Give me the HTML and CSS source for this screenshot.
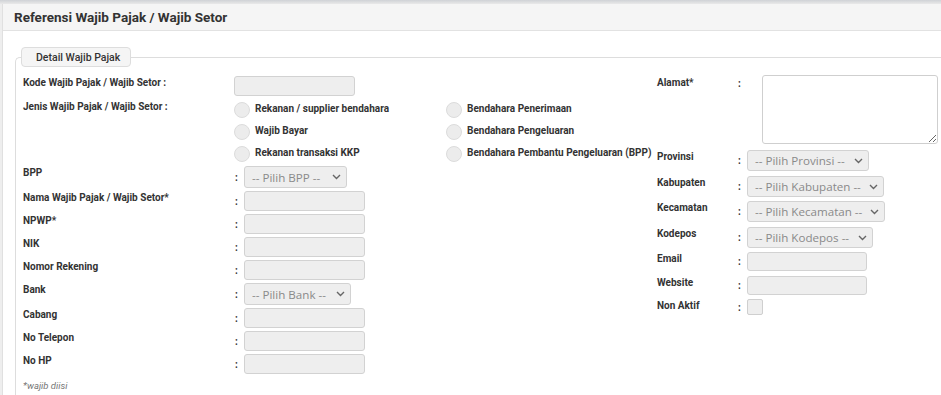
FILE: index.html
```html
<!DOCTYPE html>
<html lang="en">
<head>
    <meta charset="UTF-8">
    <meta name="viewport" content="width=device-width, initial-scale=1.0">
    <title>Referensi Wajib Pajak / Wajib Setor</title>
    <link rel="stylesheet" href="styles.css">
</head>
<body>
    <div class="top-shadow"></div>
    <div class="panel">
        <div class="panel-heading">Referensi Wajib Pajak / Wajib Setor</div>
        <div class="panel-body">
            <fieldset class="box">
                <legend class="box-title">Detail Wajib Pajak</legend>
                <div class="cols">
                    <!-- kolom kiri -->
                    <div class="col-left">
                        <div class="row row-kode">
                            <label class="lbl">Kode Wajib Pajak / Wajib Setor :</label>
                            <input type="text" class="field" disabled>
                        </div>
                        <div class="row row-jenis">
                            <label class="lbl">Jenis Wajib Pajak / Wajib Setor :</label>
                            <div class="radio-grid">
                                <label class="radio"><input type="radio" name="jenis"><span>Rekanan / supplier bendahara</span></label>
                                <label class="radio"><input type="radio" name="jenis"><span>Bendahara Penerimaan</span></label>
                                <label class="radio"><input type="radio" name="jenis"><span>Wajib Bayar</span></label>
                                <label class="radio"><input type="radio" name="jenis"><span>Bendahara Pengeluaran</span></label>
                                <label class="radio"><input type="radio" name="jenis"><span>Rekanan transaksi KKP</span></label>
                                <label class="radio"><input type="radio" name="jenis"><span>Bendahara Pembantu Pengeluaran (BPP)</span></label>
                            </div>
                        </div>
                        <div class="row">
                            <label class="lbl">BPP</label>
                            <span class="colon">:</span>
                            <div class="select-wrap sel-bpp">
                                <select class="select" disabled><option>-- Pilih BPP --</option></select>
                                <svg class="chev" width="9" height="6" viewBox="0 0 9 6"><path d="M1 1l3.5 3.5L8 1" fill="none" stroke="#666" stroke-width="1.4"/></svg>
                            </div>
                        </div>
                        <div class="row">
                            <label class="lbl">Nama Wajib Pajak / Wajib Setor*</label>
                            <span class="colon">:</span>
                            <input type="text" class="field" disabled>
                        </div>
                        <div class="row">
                            <label class="lbl">NPWP*</label>
                            <span class="colon">:</span>
                            <input type="text" class="field" disabled>
                        </div>
                        <div class="row">
                            <label class="lbl">NIK</label>
                            <span class="colon">:</span>
                            <input type="text" class="field" disabled>
                        </div>
                        <div class="row">
                            <label class="lbl">Nomor Rekening</label>
                            <span class="colon">:</span>
                            <input type="text" class="field" disabled>
                        </div>
                        <div class="row">
                            <label class="lbl">Bank</label>
                            <span class="colon">:</span>
                            <div class="select-wrap sel-bank">
                                <select class="select" disabled><option>-- Pilih Bank --</option></select>
                                <svg class="chev" width="9" height="6" viewBox="0 0 9 6"><path d="M1 1l3.5 3.5L8 1" fill="none" stroke="#666" stroke-width="1.4"/></svg>
                            </div>
                        </div>
                        <div class="row">
                            <label class="lbl">Cabang</label>
                            <span class="colon">:</span>
                            <input type="text" class="field" disabled>
                        </div>
                        <div class="row">
                            <label class="lbl">No Telepon</label>
                            <span class="colon">:</span>
                            <input type="text" class="field" disabled>
                        </div>
                        <div class="row">
                            <label class="lbl">No HP</label>
                            <span class="colon">:</span>
                            <input type="text" class="field" disabled>
                        </div>
                        <div class="note">*wajib diisi</div>
                    </div>

                    <!-- kolom kanan -->
                    <div class="col-right">
                        <div class="rrow rrow-alamat">
                            <label class="rlbl">Alamat*</label>
                            <span class="colon">:</span>
                            <textarea class="area" disabled></textarea>
                        </div>
                        <div class="rrow">
                            <label class="rlbl">Provinsi</label>
                            <span class="colon">:</span>
                            <div class="select-wrap sel-prov">
                                <select class="select" disabled><option>-- Pilih Provinsi --</option></select>
                                <svg class="chev" width="9" height="6" viewBox="0 0 9 6"><path d="M1 1l3.5 3.5L8 1" fill="none" stroke="#666" stroke-width="1.4"/></svg>
                            </div>
                        </div>
                        <div class="rrow">
                            <label class="rlbl">Kabupaten</label>
                            <span class="colon">:</span>
                            <div class="select-wrap sel-kab">
                                <select class="select" disabled><option>-- Pilih Kabupaten --</option></select>
                                <svg class="chev" width="9" height="6" viewBox="0 0 9 6"><path d="M1 1l3.5 3.5L8 1" fill="none" stroke="#666" stroke-width="1.4"/></svg>
                            </div>
                        </div>
                        <div class="rrow">
                            <label class="rlbl">Kecamatan</label>
                            <span class="colon">:</span>
                            <div class="select-wrap sel-kec">
                                <select class="select" disabled><option>-- Pilih Kecamatan --</option></select>
                                <svg class="chev" width="9" height="6" viewBox="0 0 9 6"><path d="M1 1l3.5 3.5L8 1" fill="none" stroke="#666" stroke-width="1.4"/></svg>
                            </div>
                        </div>
                        <div class="rrow">
                            <label class="rlbl">Kodepos</label>
                            <span class="colon">:</span>
                            <div class="select-wrap sel-kode">
                                <select class="select" disabled><option>-- Pilih Kodepos --</option></select>
                                <svg class="chev" width="9" height="6" viewBox="0 0 9 6"><path d="M1 1l3.5 3.5L8 1" fill="none" stroke="#666" stroke-width="1.4"/></svg>
                            </div>
                        </div>
                        <div class="rrow">
                            <label class="rlbl">Email</label>
                            <span class="colon">:</span>
                            <input type="text" class="field field-r" disabled>
                        </div>
                        <div class="rrow">
                            <label class="rlbl">Website</label>
                            <span class="colon">:</span>
                            <input type="text" class="field field-r" disabled>
                        </div>
                        <div class="rrow">
                            <label class="rlbl">Non Aktif</label>
                            <span class="colon">:</span>
                            <input type="checkbox" class="check" disabled>
                        </div>
                    </div>
                </div>
            </fieldset>
        </div>
    </div>
</body>
</html>
```

FILE: styles.css
```css
body {
    margin: 0;
    background: #eeeeee;
    font-family: Roboto, "Open Sans", sans-serif;
    color: #333;
    overflow: hidden;
}
.top-shadow {
    height: 4px;
    background: linear-gradient(#cfd2d6, #e9e9e9);
}
.panel {
    margin-left: 2px;
    background: #fff;
    border-left: 1px solid #e0e0e0;
    height: 391px;
}
.panel-heading {
    height: 26px;
    line-height: 26px;
    padding-left: 11px;
    background: #f5f5f5;
    border-bottom: 1px solid #e2e2e2;
    font-size: 13.5px;
    font-weight: 700;
    color: #333;
}
.panel-body {
    padding: 16px 0 0 12px;
}
.box {
    margin: 0;
    padding: 9px 0 20px 7px;
    border: 1px solid #dddddd;
    border-right: none;
    border-radius: 5px 0 0 0;
    min-width: 0;
}
.box-title {
    margin-left: -2px;
    padding: 0 10px 0 14px;
    height: 20px;
    line-height: 19px;
    box-sizing: border-box;
    background: #f5f5f5;
    border: 1px solid #dddddd;
    border-radius: 4px;
    font-size: 10.5px;
    font-weight: 500;
    color: #333;
}
.cols {
    display: grid;
    grid-template-columns: 634px 1fr;
}

/* kolom kiri */
.col-left {
    display: flex;
    flex-direction: column;
    gap: 3px;
}
.row {
    display: flex;
    align-items: center;
}
.lbl {
    align-self: flex-start;
    width: 211px;
    flex: none;
    font-size: 10px;
    font-weight: 700;
    line-height: 14px;
}
.colon {
    width: 10px;
    flex: none;
    padding-left: 1px;
    box-sizing: border-box;
    font-size: 10px;
    font-weight: 700;
    line-height: 14px;
    padding-top: 1px;
}
.row-kode {
    margin-bottom: 3px;
}
.row-jenis {
    align-items: flex-start;
    margin-bottom: 1px;
}
.row-jenis .lbl {
    margin-top: -2px;
}
.radio-grid {
    display: grid;
    grid-template-columns: 212px auto;
    row-gap: 6px;
}
.radio {
    display: flex;
    align-items: center;
    gap: 5px;
    height: 16px;
    font-size: 10px;
    font-weight: 700;
    white-space: nowrap;
}
.radio span {
    margin-top: -3px;
}
.radio input {
    appearance: none;
    margin: 0;
    width: 16px;
    height: 16px;
    border-radius: 50%;
    background: #ececec;
    border: 1px solid #dcdcdc;
    box-sizing: border-box;
}
.field {
    margin: 0;
    width: 121px;
    height: 20px;
    box-sizing: border-box;
    background: #eeeeee;
    border: 1px solid #d2d2d2;
    border-radius: 3px;
    padding: 0 6px;
}
.field-r {
    width: 120px;
    height: 19px;
}
.select-wrap {
    position: relative;
    height: 22px;
}
.select {
    appearance: none;
    margin: 0;
    width: 100%;
    height: 100%;
    box-sizing: border-box;
    background: #eeeeee;
    border: 1px solid #d2d2d2;
    border-radius: 3px;
    padding: 0 0 0 7px;
    font-family: "Open Sans", Roboto, sans-serif;
    font-size: 11.6px;
    color: #8a8a8a;
    opacity: 1;
}
.chev {
    position: absolute;
    right: 6px;
    top: 8px;
}
.sel-bpp { width: 103px; }
.sel-bank { width: 107px; }
.note {
    margin-top: 2px;
    font-size: 9.5px;
    font-style: italic;
    color: #777;
    line-height: 13px;
}

/* kolom kanan */
.col-right {
    display: flex;
    flex-direction: column;
    gap: 4.5px;
}
.rrow {
    display: flex;
    align-items: center;
}
.rlbl {
    align-self: flex-start;
    width: 80px;
    flex: none;
    font-size: 10px;
    font-weight: 700;
    line-height: 14px;
}
.rrow-alamat {
    align-items: flex-start;
    margin-top: -1px;
    margin-bottom: 1.5px;
}
.rrow-alamat .rlbl,
.rrow-alamat .colon {
    margin-top: 1px;
}
.area {
    margin: 0 0 0 15px;
    width: 176px;
    height: 69px;
    box-sizing: border-box;
    background: #fff;
    border: 1px solid #cfcfcf;
    border-radius: 3px;
}
.rrow .select-wrap {
    height: 21px;
}
.sel-prov { width: 122px; }
.sel-kab { width: 137px; }
.sel-kec { width: 138px; }
.sel-kode { width: 126px; }
.check {
    appearance: none;
    margin: 0;
    width: 16px;
    height: 16px;
    box-sizing: border-box;
    background: #eeeeee;
    border: 1px solid #cfcfcf;
    border-radius: 2px;
}
```
